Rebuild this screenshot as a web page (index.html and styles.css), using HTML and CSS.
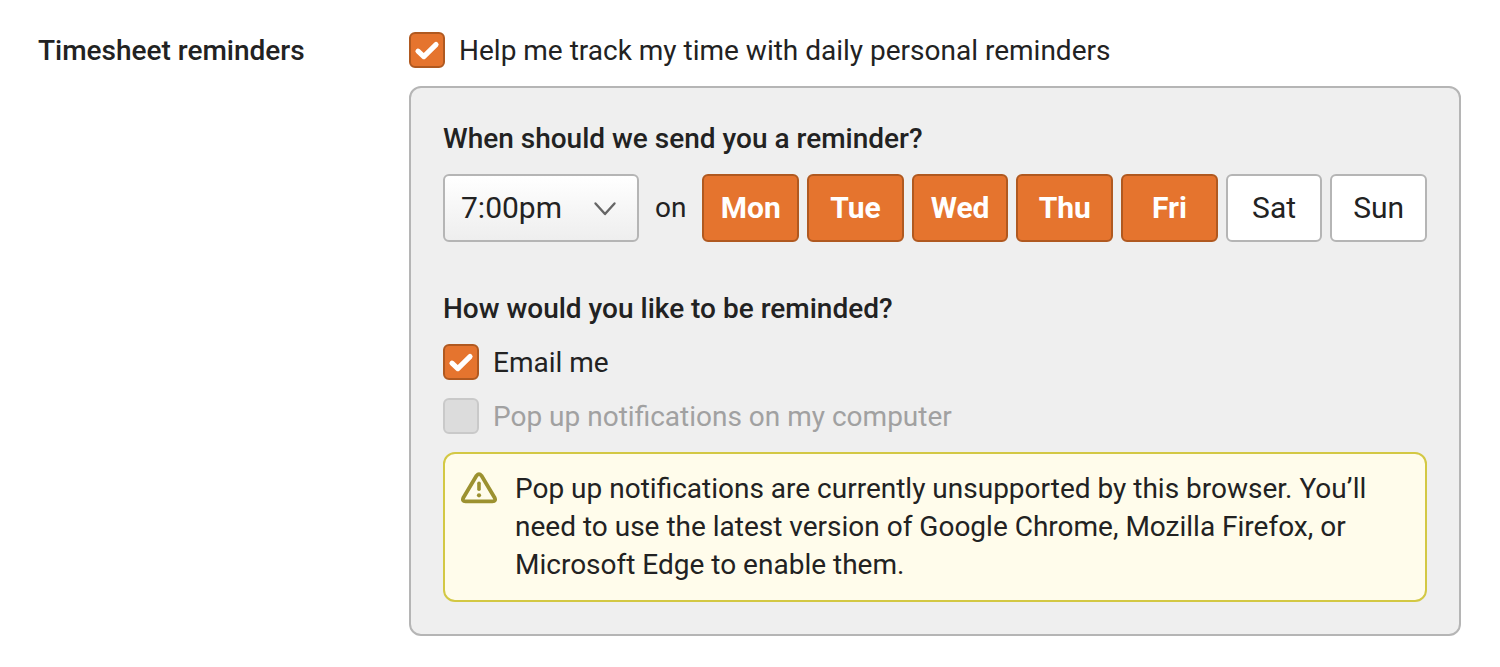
FILE: index.html
```html
<!DOCTYPE html>
<html lang="en">
<head>
<meta charset="utf-8">
<meta name="viewport" content="width=device-width, initial-scale=1">
<title>Timesheet reminders</title>
<link rel="stylesheet" href="styles.css">
</head>
<body>
<main class="setting">
  <h2 class="setting-title">Timesheet reminders</h2>
  <div class="stack">
    <label class="check"><input type="checkbox" checked><span>Help me track my time with daily personal reminders</span></label>
    <div class="panel">
      <section class="stack">
        <h3 class="question" id="when">When should we send you a reminder?</h3>
        <div class="schedule">
          <select class="time" id="time" aria-labelledby="when">
            <option>7:00pm</option>
          </select>
          <label class="on" for="time">on</label>
          <div class="days" role="group" aria-label="Reminder days">
            <button type="button" class="day" aria-pressed="true">Mon</button>
            <button type="button" class="day" aria-pressed="true">Tue</button>
            <button type="button" class="day" aria-pressed="true">Wed</button>
            <button type="button" class="day" aria-pressed="true">Thu</button>
            <button type="button" class="day" aria-pressed="true">Fri</button>
            <button type="button" class="day" aria-pressed="false">Sat</button>
            <button type="button" class="day" aria-pressed="false">Sun</button>
          </div>
        </div>
      </section>
      <section class="stack">
        <h3 class="question">How would you like to be reminded?</h3>
        <label class="check"><input type="checkbox" checked><span>Email me</span></label>
        <label class="check check-disabled"><input type="checkbox" disabled><span>Pop up notifications on my computer</span></label>
        <div class="notice">
          <svg class="notice-icon" viewBox="0 0 36 38" fill="none" aria-hidden="true">
            <path d="M15.6 5.6 2.5 27.4Q0.6 31.4 4.6 31.4H31.4Q35.4 31.4 33.5 27.4L20.4 5.6Q18 2.6 15.6 5.6Z" stroke="#9c9130" stroke-width="3.8" stroke-linejoin="round"/>
            <path d="M18 13.2v6" stroke="#9c9130" stroke-width="3.6" stroke-linecap="round"/>
            <circle cx="18" cy="25.3" r="2.1" fill="#9c9130"/>
          </svg>
          <p class="notice-text">Pop up notifications are currently unsupported by this browser. You’ll need to use the latest version of Google Chrome, Mozilla Firefox, or Microsoft Edge to enable them.</p>
        </div>
      </section>
    </div>
  </div>
</main>
</body>
</html>
```
FILE: styles.css
```css
* {
  box-sizing: border-box;
}

body {
  margin: 0;
  background: #fff;
  color: #222;
  font-family: Roboto, "Liberation Sans", sans-serif;
  font-size: 28px;
  line-height: 34px;
}

h2, h3, p {
  margin: 0;
}

.setting {
  display: grid;
  grid-template-columns: 371px 1fr;
  padding: 32px 39px 31px 38px;
}

.setting-title, .question {
  padding-top: 2px;
  font-size: 28px;
  font-weight: 500;
}

.stack {
  display: flex;
  flex-direction: column;
  gap: 18px;
}

.check {
  display: flex;
  align-items: center;
  gap: 14px;
}

.check span {
  padding-top: 2px;
}

.check input {
  appearance: none;
  flex: none;
  width: 36px;
  height: 36px;
  margin: 0;
  border: 2px solid #b5b5b5;
  border-radius: 6px;
  background: #fff;
}

.check input:checked {
  border-color: #b05920;
  background: #e5742e url("data:image/svg+xml,%3Csvg xmlns='http://www.w3.org/2000/svg' viewBox='0 0 32 32'%3E%3Cpath d='M7 17.2 12.8 22.6 25 10.6' fill='none' stroke='white' stroke-width='5.2' stroke-linecap='round' stroke-linejoin='round'/%3E%3C/svg%3E") center / 32px 32px no-repeat;
}

.check input:disabled {
  border-color: #c9c9c9;
  background: #dcdcdc;
}

.check-disabled {
  color: #a1a1a1;
}

.panel {
  display: flex;
  flex-direction: column;
  gap: 48px;
  padding: 32px;
  border: 2px solid #b5b5b5;
  border-radius: 12px;
  background: #efefef;
}

.schedule {
  display: flex;
  align-items: center;
  gap: 16px;
}

.time, .day {
  height: 68px;
  border: 2px solid #b5b5b5;
  border-radius: 6px;
  color: inherit;
  font: inherit;
  font-size: 30px;
}

.time {
  appearance: none;
  width: 196px;
  padding: 0 16px;
  background: url("data:image/svg+xml,%3Csvg xmlns='http://www.w3.org/2000/svg' viewBox='0 0 24 16'%3E%3Cpath d='M2.5 3.5 12 14 21.5 3.5' fill='none' stroke='%23666' stroke-width='2.4' stroke-linecap='round' stroke-linejoin='round'/%3E%3C/svg%3E") right 20px center / 24px 16px no-repeat, linear-gradient(#fff, #eee);
}

.days {
  display: flex;
  flex: 1;
  gap: 8px;
}

.day {
  flex: 1 1 0;
  min-width: 0;
  padding: 0;
  background: #fff;
}

.day[aria-pressed="true"] {
  border-color: #b05920;
  background: #e5742e;
  color: #fff;
  font-weight: 700;
}

.notice {
  display: flex;
  gap: 18px;
  padding: 16px;
  border: 2px solid #d3c844;
  border-radius: 12px;
  background: #fffceb;
}

.notice-icon {
  flex: none;
  width: 36px;
  height: 38px;
}

.notice-text {
  line-height: 38px;
}
```
